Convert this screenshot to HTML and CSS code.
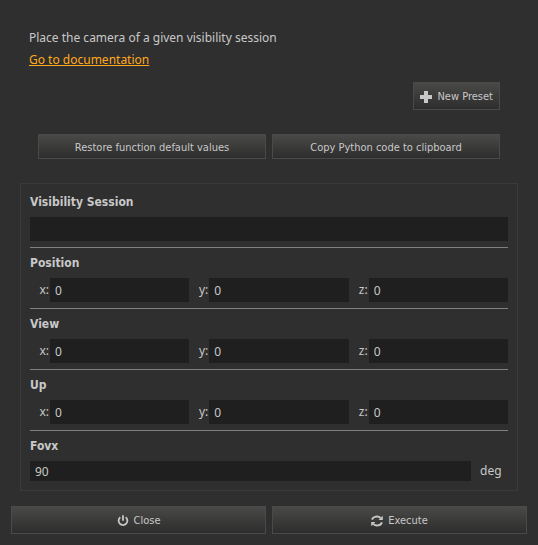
FILE: index.html
```html
<!DOCTYPE html>
<html lang="en">

<head>
    <meta charset="UTF-8">
    <title>Visibility Session Camera</title>
    <link rel="stylesheet" href="styles.css">
</head>

<body>
    <form class="dialog">
        <div class="intro">
            <p>Place the camera of a given visibility session</p>
            <p><a href="#">Go to documentation</a></p>
        </div>
        <div class="preset">
            <button type="button" class="btn btn_preset">
                <svg class="icon" viewBox="0 0 12 12"><path d="M4 0h4v4h4v4h-4v4h-4v-4h-4v-4h4z" /></svg>
                New Preset
            </button>
        </div>
        <div class="tools">
            <button type="button" class="btn btn_small">Restore function default values</button>
            <button type="button" class="btn btn_small">Copy Python code to clipboard</button>
        </div>

        <div class="params">
            <div class="param">
                <label class="param_title" for="session">Visibility Session</label>
                <input type="text" id="session">
            </div>
            <div class="param" role="group" aria-labelledby="position">
                <div class="param_title" id="position">Position</div>
                <div class="vector">
                    <label for="position_x">x:</label><input type="text" id="position_x" value="0">
                    <label for="position_y">y:</label><input type="text" id="position_y" value="0">
                    <label for="position_z">z:</label><input type="text" id="position_z" value="0">
                </div>
            </div>
            <div class="param" role="group" aria-labelledby="view">
                <div class="param_title" id="view">View</div>
                <div class="vector">
                    <label for="view_x">x:</label><input type="text" id="view_x" value="0">
                    <label for="view_y">y:</label><input type="text" id="view_y" value="0">
                    <label for="view_z">z:</label><input type="text" id="view_z" value="0">
                </div>
            </div>
            <div class="param" role="group" aria-labelledby="up">
                <div class="param_title" id="up">Up</div>
                <div class="vector">
                    <label for="up_x">x:</label><input type="text" id="up_x" value="0">
                    <label for="up_y">y:</label><input type="text" id="up_y" value="0">
                    <label for="up_z">z:</label><input type="text" id="up_z" value="0">
                </div>
            </div>
            <div class="param">
                <label class="param_title" for="fovx">Fovx</label>
                <div class="with_unit">
                    <input type="text" id="fovx" value="90">
                    <span class="unit">deg</span>
                </div>
            </div>
        </div>

        <div class="actions">
            <button type="button" class="btn">
                <svg class="icon" viewBox="0 0 12 12">
                    <path class="stroke" d="M3.3 2.2a4.4 4.4 0 1 0 5.4 0" />
                    <path class="stroke" d="M6 0.3v5.4" />
                </svg>
                Close
            </button>
            <button type="submit" class="btn">
                <svg class="icon" viewBox="0 0 12 12">
                    <path class="stroke" d="M1 4.6a5 4.2 0 0 1 8.8-1.4" />
                    <path class="stroke" d="M11 7.4a5 4.2 0 0 1-8.8 1.4" />
                    <path d="M11.8 0.8v4.2h-4.2z" />
                    <path d="M0.2 11.2v-4.2h4.2z" />
                </svg>
                Execute
            </button>
        </div>
    </form>
</body>

</html>
```
FILE: styles.css
```css
* {
    box-sizing: border-box;
}

body {
    margin: 0;
    background-color: #2f2f2f;
    color: #c8c8c8;
    font-family: "Noto Sans", sans-serif;
    font-size: 12px;
}

.dialog {
    padding: 27px 11px 11px;
}

.intro {
    padding: 0 18px;
}

.intro p {
    margin: 0;
    line-height: 22px;
}

.intro a {
    color: #ffaa1e;
}

.preset {
    display: flex;
    justify-content: flex-end;
    padding: 11px 27px 24px;
}

.tools {
    display: flex;
    gap: 6px;
    padding: 0 27px 24px;
}

.btn {
    flex: 1;
    display: flex;
    align-items: center;
    justify-content: center;
    gap: 5px;
    height: 28px;
    padding: 1px 6px 0;
    border: 1px solid #4a4a4a;
    background-image: linear-gradient(#494947, #2d2d2d);
    color: #c8c8c8;
    font-family: "DejaVu Sans Condensed", "DejaVu Sans", sans-serif;
    font-stretch: condensed;
    font-size: 11px;
}

.btn_preset {
    flex: none;
}

.btn_small {
    height: 25px;
}

.icon {
    width: 12px;
    height: 12px;
    fill: #c8c8c8;
}

.icon .stroke {
    fill: none;
    stroke: #c8c8c8;
    stroke-width: 1.8;
}

.params {
    margin: 0 9px 15px;
    padding: 3px 9px 9px;
    border: 1px solid #3a3a3a;
}

.param {
    padding-bottom: 6px;
    border-bottom: 1px solid #808080;
}

.param:last-child {
    padding-bottom: 0;
    border-bottom: 0;
}

.param_title {
    display: block;
    line-height: 30px;
    font-family: "DejaVu Sans Condensed", "DejaVu Sans", sans-serif;
    font-stretch: condensed;
    font-weight: bold;
}

input {
    display: block;
    width: 100%;
    min-width: 0;
    height: 24px;
    padding: 1px 5px 0;
    border: 0;
    background-color: #1f1f1f;
    color: #c8c8c8;
    font: inherit;
}

.vector {
    display: grid;
    grid-template-columns: repeat(3, 20px 1fr);
    line-height: 24px;
}

.vector label {
    padding-right: 1px;
    text-align: right;
}

.with_unit {
    display: flex;
    line-height: 20px;
}

.with_unit input {
    height: 20px;
}

.unit {
    flex: none;
    width: 37px;
    padding-left: 9px;
}

.actions {
    display: flex;
    gap: 6px;
}
```
